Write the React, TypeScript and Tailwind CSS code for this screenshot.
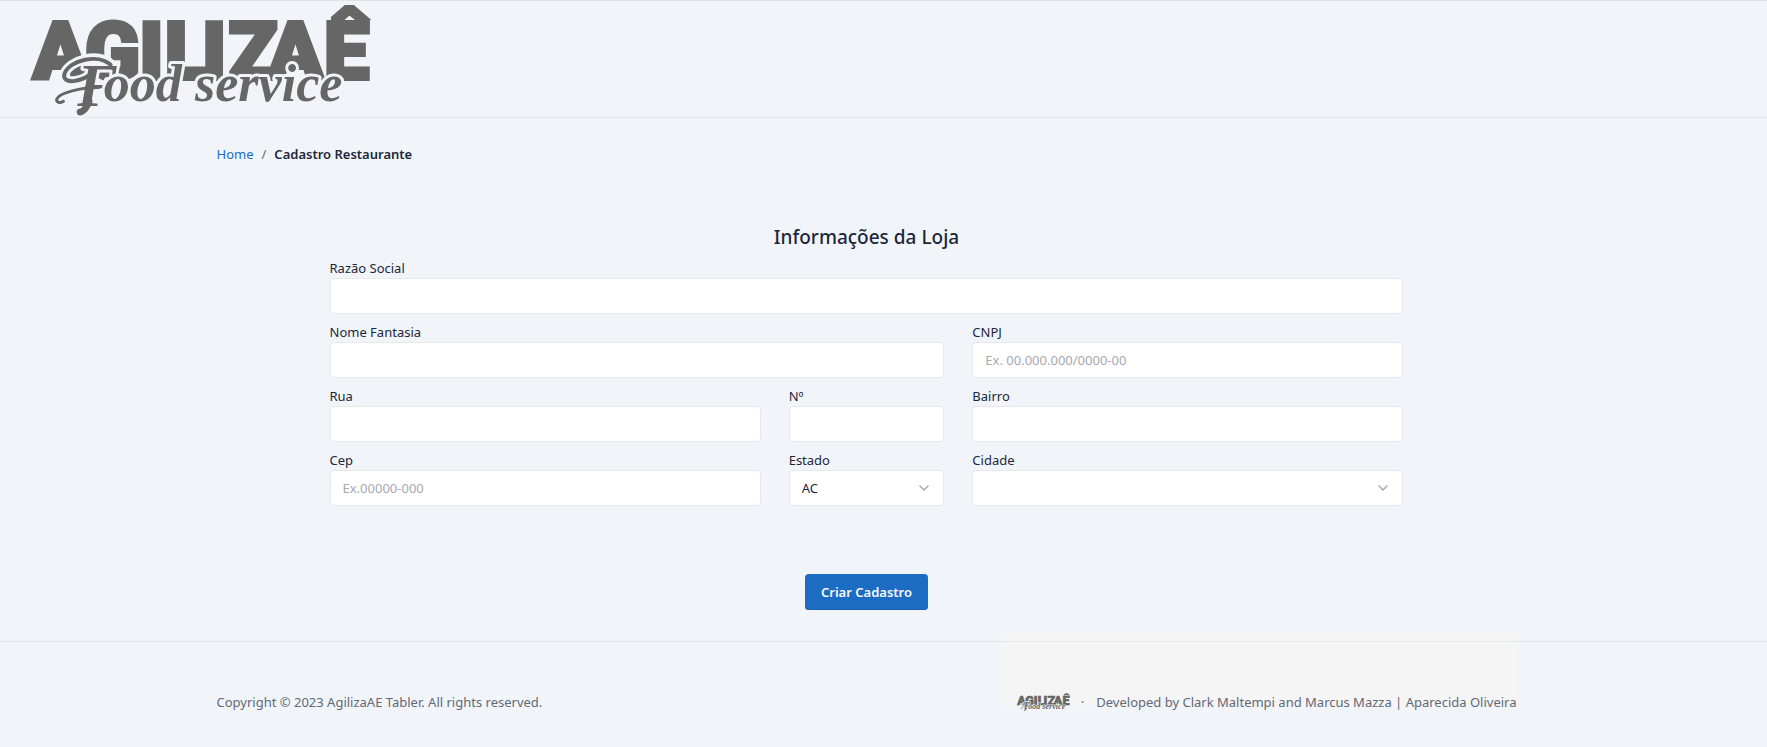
import { useId } from "react";
import type { ReactNode } from "react";

function Logo({ className }: { className: string }) {
  return (
    <svg viewBox="30 0 340 118" className={`overflow-visible ${className}`} role="img" aria-label="Agilizaê Food service">
      <text
        x="31 84 139 165 203 230 270 327"
        y="79"
        fontSize="82"
        fill="#666666"
        stroke="#666666"
        strokeWidth="4"
        fontFamily="Roboto, 'Liberation Sans', sans-serif"
        fontWeight="900"
      >
        AGILIZAÊ
      </text>
      <g fill="none" stroke="#f1f5f9" strokeWidth="10" strokeLinecap="round">
        <path d="M110 64C98 52 68 60 63 74C60 85 80 84 94 71" />
        <path d="M86 104C84 109 82 113 80 114" />
      </g>
      <g
        fill="#666666"
        stroke="#f1f5f9"
        strokeWidth="6"
        strokeLinejoin="round"
        paintOrder="stroke"
        fontFamily="'Liberation Serif', serif"
        fontStyle="italic"
        fontWeight="700"
      >
        <text x="76" y="107" fontSize="62">F</text>
        <text x="103" y="102" fontSize="53">ood service</text>
      </g>
      <g fill="none" stroke="#666666" strokeLinecap="round">
        <path d="M110 65C98 53 68 60 63 74C60 85 80 84 94 71" strokeWidth="4" />
        <path d="M98 88C80 88 58 93 55 100C55 104 59 104 62 102" strokeWidth="3" />
        <path d="M88 102C86 108 83 112 79 113" strokeWidth="7" />
      </g>
    </svg>
  );
}

function Field({ label, className, children }: { label: string; className: string; children: (id: string) => ReactNode }) {
  const id = useId();
  return (
    <div className={className}>
      <label htmlFor={id} className="block leading-5">{label}</label>
      {children(id)}
    </div>
  );
}

const control =
  "block h-9 w-full rounded border border-[#e6e8eb] bg-white px-3 text-[#1d273b] placeholder:text-[#a5a9b1] outline-none focus:border-[#90b5e2]";

function TextField({ label, className, placeholder }: { label: string; className: string; placeholder?: string }) {
  return (
    <Field label={label} className={className}>
      {(id) => <input id={id} type="text" placeholder={placeholder} className={control} />}
    </Field>
  );
}

function SelectField({ label, className, options }: { label: string; className: string; options: string[] }) {
  return (
    <Field label={label} className={className}>
      {(id) => (
        <div className="relative">
          <select id={id} className={`${control} appearance-none pr-9`}>
            {options.map((o) => (
              <option key={o}>{o}</option>
            ))}
          </select>
          <svg viewBox="0 0 16 16" className="pointer-events-none absolute top-2.5 right-3 size-4" fill="none" stroke="#a5a9b1" strokeWidth="1.5" strokeLinecap="round" strokeLinejoin="round">
            <path d="M4 6l4 4 4-4" />
          </svg>
        </div>
      )}
    </Field>
  );
}

export default function App() {
  return (
    <div className="isolate flex min-h-screen flex-col bg-[#f1f5f9] font-['Noto_Sans',sans-serif] text-[13px] leading-5 text-[#1d273b]">
      <header className="border-y border-[#e0e4e8] pl-8">
        <a href="#" className="block w-fit">
          <Logo className="h-29 w-auto" />
        </a>
      </header>

      <main className="grow pr-[34px]">
        <div className="mx-auto max-w-[1300px] pt-[26px]">
          <nav aria-label="breadcrumb">
            <ol className="flex gap-2">
              <li><a href="#" className="text-[#206bc4]">Home</a></li>
              <li aria-hidden="true" className="text-[#626976]">/</li>
              <li className="font-semibold">Cadastro Restaurante</li>
            </ol>
          </nav>
          <form className="mx-auto mt-[59px] max-w-[1074px]">
            <h2 className="text-center text-[19px] leading-7 font-medium">Informações da Loja</h2>
            <div className="mt-[7px] grid grid-cols-12 gap-x-7 gap-y-2">
              <TextField label="Razão Social" className="col-span-12" />
              <TextField label="Nome Fantasia" className="col-span-7" />
              <TextField label="CNPJ" className="col-span-5" placeholder="Ex. 00.000.000/0000-00" />
              <TextField label="Rua" className="col-span-5" />
              <TextField label="Nº" className="col-span-2" />
              <TextField label="Bairro" className="col-span-5" />
              <TextField label="Cep" className="col-span-5" placeholder="Ex.00000-000" />
              <SelectField label="Estado" className="col-span-2" options={["AC", "AL", "AP", "AM", "BA", "CE", "DF"]} />
              <SelectField label="Cidade" className="col-span-5" options={[""]} />
            </div>
            <div className="mt-17 flex justify-center">
              <button type="button" className="h-9 rounded bg-[#1c6cc4] px-4 font-semibold text-[#f8fafc] shadow-[inset_0_-1px_0_#1d60b0]">
                Criar Cadastro
              </button>
            </div>
          </form>
        </div>
      </main>

      <footer className="border-t border-[#e4e7ea] pt-12 pr-[34px] pb-[33px] text-[#626976]">
        <div className="mx-auto flex max-w-[1300px] items-center justify-between">
          <p>Copyright © 2023 AgilizaAE Tabler. All rights reserved.</p>
          <ul className="relative flex h-6 items-center gap-3">
            <li aria-hidden="true" className="absolute -top-14 right-0 bottom-2 -left-4 -z-10 bg-[#f5f5f5]" />
            <li><a href="#"><Logo className="h-auto w-[52px]" /></a></li>
            <li aria-hidden="true">·</li>
            <li>Developed by Clark Maltempi and Marcus Mazza | Aparecida Oliveira</li>
          </ul>
        </div>
      </footer>
    </div>
  );
}
